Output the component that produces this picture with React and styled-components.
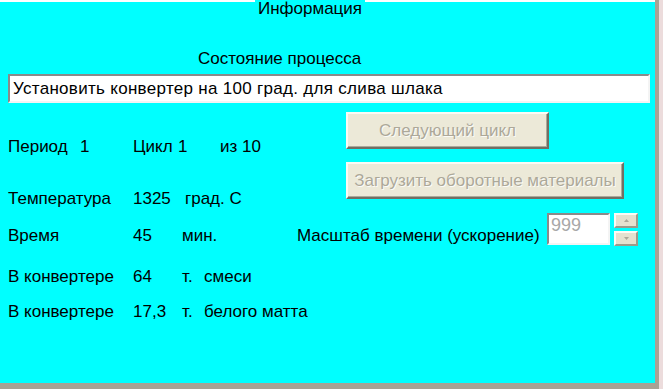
import React from 'react'
import styled, { createGlobalStyle } from 'styled-components'

const GlobalStyle = createGlobalStyle`
    body {
        margin: 0;
        font-family: "Liberation Sans", Arial, sans-serif;
        font-size: 17px;
        color: #000;
    }
`

const Window = styled.div`
    display: flex;
    width: 663px;
    height: 389px;
    background-color: #ecdcdc;
`

const Frame = styled.div`
    display: flex;
    flex-direction: column;
    width: 655px;
    height: 383px;
    background-color: #00ffff;
    border-right: 4px solid #a8a294;
    border-bottom: 6px solid #a8a294;
`

const TitleRow = styled.div`
    display: flex;
    height: 17px;
`

const TitleLine = styled.div`
    flex: ${p => p.$grow || 1};
    height: 2px;
    background-color: #fff;
`

const Title = styled.div`
    padding: 0 3px;
    line-height: 17px;
`

const Subtitle = styled.div`
    margin-top: 32px;
    padding-left: 198px;
    line-height: 20px;
`

const StatusBox = styled.div`
    margin: 5px 5px 0 8px;
    height: 25px;
    padding-left: 3px;
    line-height: 25px;
    letter-spacing: 0.3px;
    background-color: #fff;
    border-top: 2px solid #8a8a8a;
    border-left: 2px solid #8a8a8a;
    border-right: 2px solid #f4f4f4;
    border-bottom: 2px solid #f4f4f4;
    white-space: nowrap;
`

const Middle = styled.div`
    display: flex;
    padding-left: 8px;
`

const LeftColumn = styled.div`
    display: flex;
    flex-direction: column;
    width: 338px;
`

const RightColumn = styled.div`
    display: flex;
    flex-direction: column;
    align-items: flex-start;
    padding-top: 9px;
    gap: 13px;
`

const Row = styled.div`
    display: flex;
    align-items: ${p => p.$align || 'center'};
    margin-top: ${p => p.$top || 0}px;
    padding-left: ${p => p.$left || 0}px;
    padding-bottom: ${p => p.$bottom || 0}px;
    line-height: 20px;
    white-space: nowrap;
`

const Cell = styled.span`
    width: ${p => (p.$w ? `${p.$w}px` : 'auto')};
    flex-shrink: 0;
    align-self: ${p => p.$self || 'auto'};
`

const Button = styled.button`
    height: 37px;
    width: ${p => p.$w}px;
    padding: 0;
    font-family: inherit;
    font-size: 17px;
    color: #aca899;
    text-shadow: 1px 1px 0 #fbfbf7;
    background-color: #ece9d8;
    border-top: 2px solid #fbfaf4;
    border-left: 2px solid #fbfaf4;
    border-right: 2px solid #716f64;
    border-bottom: 2px solid #716f64;
    box-shadow: inset -1px -1px 0 #aca899;
`

const Spinner = styled.div`
    display: flex;
    gap: 4px;
    align-self: flex-start;
`

const SpinInput = styled.div`
    width: 57px;
    height: 28px;
    padding-left: 2px;
    font-size: 18px;
    line-height: 20px;
    color: #a8a8a8;
    background-color: #fff;
    border-top: 2px solid #8a8a8a;
    border-left: 2px solid #8a8a8a;
    border-right: 2px solid #f4f4f4;
    border-bottom: 2px solid #f4f4f4;
`

const SpinButtons = styled.div`
    display: flex;
    flex-direction: column;
    gap: 3px;
`

const SpinButton = styled.div`
    display: flex;
    align-items: center;
    justify-content: center;
    width: 20px;
    height: 11px;
    background-color: #e4e1cf;
    border-top: 2px solid #fbfaf4;
    border-left: 2px solid #fbfaf4;
    border-right: 2px solid #9d9a8a;
    border-bottom: 2px solid #9d9a8a;
`

const Arrow = ({ down }) => (
    <svg width="5" height="3" viewBox="0 0 5 3">
        <path d={down ? 'M0 0 H5 L2.5 3 Z' : 'M0 3 H5 L2.5 0 Z'} fill="#aca899" />
    </svg>
)

const rows = [
    { label: 'В конвертере', value: '64', unit: 'т.', what: 'смеси', top: 19 },
    { label: 'В конвертере', value: '17,3', unit: 'т.', what: 'белого матта', top: 15 }
]

export default function App() {
    return (
        <Window>
            <GlobalStyle />
            <Frame>
                <TitleRow>
                    <TitleLine $grow={255} />
                    <Title>Информация</Title>
                    <TitleLine $grow={290} />
                </TitleRow>

                <Subtitle>Состояние процесса</Subtitle>
                <StatusBox>Установить конвертер на 100 град. для слива шлака</StatusBox>

                <Middle>
                    <LeftColumn>
                        <Row $top={34}>
                            <Cell $w={72}>Период</Cell>
                            <Cell $w={53}>1</Cell>
                            <Cell $w={45}>Цикл</Cell>
                            <Cell $w={42}>1</Cell>
                            <Cell>из 10</Cell>
                        </Row>
                        <Row $top={32}>
                            <Cell $w={125}>Температура</Cell>
                            <Cell $w={52}>1325</Cell>
                            <Cell>град. С</Cell>
                        </Row>
                    </LeftColumn>
                    <RightColumn>
                        <Button $w={203} disabled>Следующий цикл</Button>
                        <Button $w={278} disabled>Загрузить оборотные материалы</Button>
                    </RightColumn>
                </Middle>

                <Row $top={4} $left={8} $bottom={2}>
                    <Cell $w={125} $self="flex-end">Время</Cell>
                    <Cell $w={49} $self="flex-end">45</Cell>
                    <Cell $w={115} $self="flex-end">мин.</Cell>
                    <Cell $w={250} $self="flex-end">Масштаб времени (ускорение)</Cell>
                    <Spinner>
                        <SpinInput>999</SpinInput>
                        <SpinButtons>
                            <SpinButton><Arrow /></SpinButton>
                            <SpinButton><Arrow down /></SpinButton>
                        </SpinButtons>
                    </Spinner>
                </Row>

                {rows.map((r, i) => (
                    <Row key={i} $top={r.top} $left={8}>
                        <Cell $w={125}>{r.label}</Cell>
                        <Cell $w={49}>{r.value}</Cell>
                        <Cell $w={22}>{r.unit}</Cell>
                        <Cell>{r.what}</Cell>
                    </Row>
                ))}
            </Frame>
        </Window>
    )
}
